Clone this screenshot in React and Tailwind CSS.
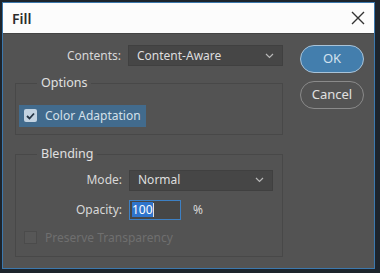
import React from 'react';

const FONT = { fontFamily: '"Noto Sans", "Open Sans", Arial, sans-serif' };

const Chevron = () => (
  <svg width="9" height="6" viewBox="0 0 9 6" className="shrink-0">
    <path d="M1 1l3.5 3.5L8 1" fill="none" stroke="#b8b8b8" strokeWidth="1.2" />
  </svg>
);

const Select = ({ value, width }) => (
  <div className={`flex items-center justify-between h-[21px] bg-[#464646] border border-[#404040] pl-[8px] pr-[8px] text-[#dedede] ${width}`}>
    <span>{value}</span>
    <Chevron />
  </div>
);

export default function App() {
  return (
    <div className="w-[380px] h-[273px] bg-[#1d242c] pt-[2px] pl-[2px]" style={FONT}>
      <div className="w-[373px] h-[267px] border border-[#3c78ad] flex flex-col bg-[#535353]">
        <div className="h-[31px] bg-[#fcfcfc] flex items-center justify-between pl-[9px] pr-[8px] border-b border-[#444]">
          <span className="text-[14px] font-semibold text-[#2b2b2b]">Fill</span>
          <svg width="16" height="16" viewBox="0 0 16 16">
            <path d="M2 2l12 12M14 2L2 14" stroke="#333" strokeWidth="1.4" />
          </svg>
        </div>

        <div className="flex pl-[12px] pt-[11px] text-[12px] text-[#d8d8d8]">
          <div className="w-[268px] flex flex-col">
            <div className="flex items-center gap-[7px]">
              <span className="w-[106px] text-right">Contents:</span>
              <Select value="Content-Aware" width="w-[155px]" />
            </div>

            <fieldset className="mt-[8px] border border-[#484848] pl-[3px] pb-[7px]">
              <legend className="ml-[18px] px-[4px] text-[12.5px] text-[#e0e0e0]">Options</legend>
              <div className="mt-[12px] w-[127px] h-[22px] bg-[#426b8d] flex items-center pl-[5px] gap-[8px]">
                <div className="w-[13px] h-[13px] rounded-[2px] bg-[#c3d3e1] flex items-center justify-center">
                  <svg width="9" height="8" viewBox="0 0 9 8">
                    <path d="M1 4l2.5 2.5L8 1.5" fill="none" stroke="#243444" strokeWidth="1.8" />
                  </svg>
                </div>
                <span className="text-[#d4e0ea]">Color Adaptation</span>
              </div>
            </fieldset>

            <fieldset className="mt-[10px] border border-[#484848] pl-[3px] h-[112px]">
              <legend className="ml-[18px] px-[4px] text-[12.5px] text-[#e0e0e0]">Blending</legend>
              <div className="mt-[6px] flex items-center gap-[7px] -ml-[3px]">
                <span className="w-[106px] text-right">Mode:</span>
                <Select value="Normal" width="w-[144px]" />
              </div>
              <div className="mt-[9px] flex items-center gap-[7px] -ml-[3px]">
                <span className="w-[106px] text-right">Opacity:</span>
                <div className="w-[52px] h-[20px] bg-[#464646] border border-[#3d80c4] flex items-center pl-[2px]">
                  <span className="bg-[#2f74cc] text-white leading-[15px]">100</span>
                  <span className="w-px h-[14px] bg-[#e0e0e0]" />
                </div>
                <span className="ml-[5px]">%</span>
              </div>
              <div className="mt-[9px] flex items-center pl-[5px] gap-[8px]">
                <div className="w-[13px] h-[13px] bg-[#575757] border border-[#4b4b4b]" />
                <span className="text-[#6f6f6f]">Preserve Transparency</span>
              </div>
            </fieldset>
          </div>

          <div className="ml-[17px] flex flex-col gap-[8px]">
            <button className="w-[64px] h-[28px] rounded-full bg-[#437ead] border border-[#a9c3d8] text-[#d2e2ef] text-[13px]">
              OK
            </button>
            <button className="w-[64px] h-[28px] rounded-full border border-[#8a8a8a] text-[#e0e0e0] text-[13px]">
              Cancel
            </button>
          </div>
        </div>
      </div>
    </div>
  );
}
